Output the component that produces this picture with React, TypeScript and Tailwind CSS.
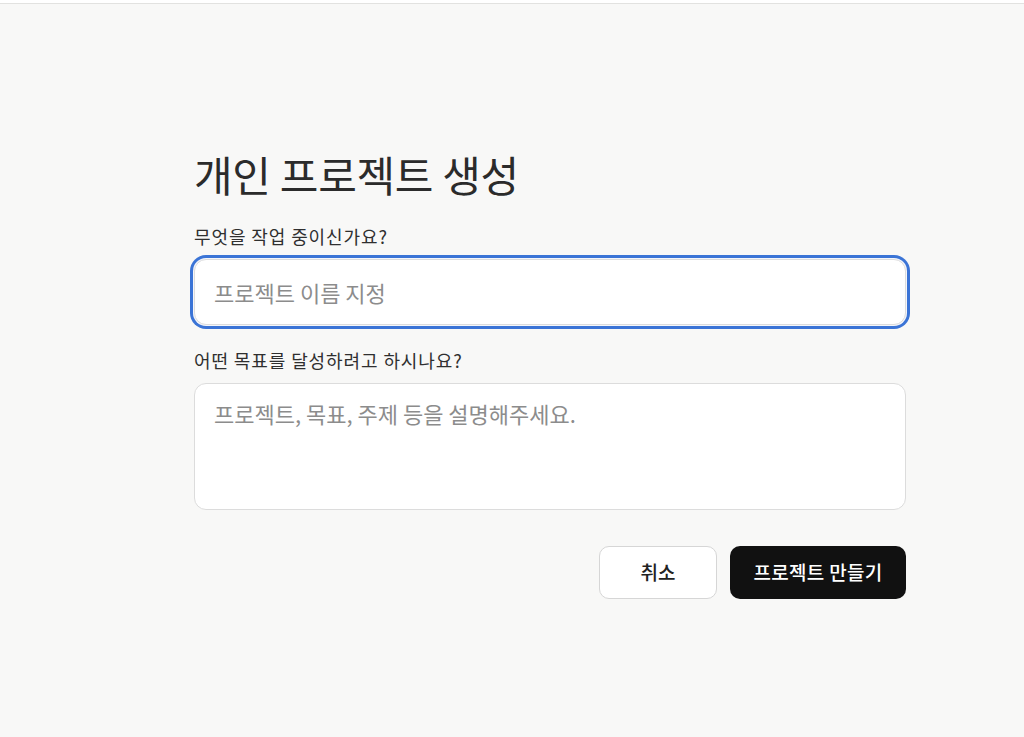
import React from 'react';

export default function App() {
  const font = { fontFamily: '"Noto Sans CJK KR", "Noto Sans", sans-serif' };

  return (
    <div className="min-h-[737px] w-full bg-[#f8f8f7]" style={font}>
      {/* top strip */}
      <div className="h-[3px] bg-white" />
      <div className="h-px bg-[#e2e2e0]" />

      <div className="ml-[194px] w-[712px] pt-[142px]">
        <h1 className="text-[42px] leading-[56px] font-normal text-[#2b2b2b] tracking-[-0.3px]">
          개인 프로젝트 생성
        </h1>

        <label className="mt-[23px] block text-[18px] leading-[22px] text-[#2f2f2f] tracking-[0.9px]">
          무엇을 작업 중이신가요?
        </label>
        <input
          autoFocus
          placeholder="프로젝트 이름 지정"
          className="mt-[12px] block h-[66px] w-full rounded-[12px] border border-[#dcdcdc] bg-white px-[19px] text-[22px] text-[#2f2f2f] placeholder:text-[#8c8c8c] outline-none shadow-[0_0_0_1px_#f4f6fb,0_0_0_4px_#3b74d6]"
          style={font}
        />

        <label className="mt-[24px] block text-[18px] leading-[22px] text-[#2f2f2f] tracking-[0.9px]">
          어떤 목표를 달성하려고 하시나요?
        </label>
        <textarea
          placeholder="프로젝트, 목표, 주제 등을 설명해주세요."
          className="mt-[12px] block h-[127px] w-full resize-none rounded-[12px] border border-[#dcdcdc] bg-white px-[19px] py-[14px] text-[22px] leading-[30px] text-[#2f2f2f] placeholder:text-[#8c8c8c] outline-none"
          style={font}
        />

        <div className="mt-[36px] flex justify-end gap-[13px]">
          <button className="h-[53px] w-[118px] rounded-[10px] border border-[#d6d6d6] bg-white text-[19px] font-medium text-[#222]">
            취소
          </button>
          <button className="h-[53px] w-[176px] rounded-[10px] bg-[#111111] text-[19px] font-medium text-white tracking-[0.3px]">
            프로젝트 만들기
          </button>
        </div>
      </div>
    </div>
  );
}
